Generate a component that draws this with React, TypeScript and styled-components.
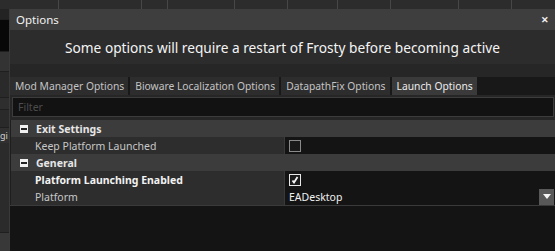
import styled, { createGlobalStyle } from 'styled-components';

const GlobalStyle = createGlobalStyle`
  html, body {
    margin: 0;
    padding: 0;
    background: #2a2a2a;
    overflow: hidden;
  }
  * {
    box-sizing: border-box;
  }
`;

const Page = styled.div`
  width: 555px;
  height: 251px;
  display: flex;
  flex-direction: column;
  font-family: 'Noto Sans', 'Open Sans', sans-serif;
  overflow: hidden;
`;

const TopStrip = styled.div`
  height: 9px;
  display: flex;
  flex-shrink: 0;
  background: #2c2c2c;
`;

const TopCell = styled.div<{ $w: number }>`
  width: ${(p) => p.$w}px;
  flex-shrink: 0;
  border-left: 1px solid #474747;
  &:first-child {
    border-left: none;
  }
`;

const Body = styled.div`
  flex: 1;
  display: flex;
  min-height: 0;
`;

const LeftStrip = styled.div`
  width: 9px;
  flex-shrink: 0;
  display: flex;
  flex-direction: column;
  overflow: hidden;
`;

const LeftPiece = styled.div<{ $h: number; $bg: string }>`
  height: ${(p) => p.$h}px;
  flex-shrink: 0;
  background: ${(p) => p.$bg};
  border-bottom: 1px solid #1f1f1f;
`;

const LeftText = styled.div`
  font-size: 9px;
  color: #d0d0d0;
  line-height: 15px;
  height: 15px;
  background: #303030;
  flex-shrink: 0;
`;

const Dialog = styled.div`
  flex: 1;
  display: flex;
  flex-direction: column;
  background: #141414;
  border-left: 1px solid #3a3a3a;
  min-width: 0;
`;

const TitleBar = styled.div`
  height: 21px;
  flex-shrink: 0;
  background: #3e3e3e;
  display: flex;
  align-items: center;
  justify-content: space-between;
  padding: 0 6px 0 6px;
  color: #f2f2f2;
  font-size: 11.5px;
`;

const Close = styled.span`
  font-size: 9px;
  font-weight: bold;
  line-height: 1;
`;

const Message = styled.div`
  height: 34px;
  flex-shrink: 0;
  background: #2c2c2c;
  display: flex;
  align-items: center;
  justify-content: center;
  color: #f4f4f4;
  font-size: 13.7px;
`;

const Spacer = styled.div`
  height: 13px;
  flex-shrink: 0;
  background: #262626;
`;

const TabBar = styled.div`
  height: 18px;
  flex-shrink: 0;
  display: flex;
  background: #181818;
  gap: 2px;
`;

const Tab = styled.div<{ $active?: boolean }>`
  display: flex;
  align-items: center;
  padding: 0 4px 0 5px;
  font-size: 10.3px;
  color: ${(p) => (p.$active ? '#ececec' : '#c4c4c4')};
  background: ${(p) => (p.$active ? '#3a3a3a' : '#2d2d2d')};
  white-space: nowrap;
`;

const FilterWrap = styled.div`
  flex-shrink: 0;
  padding: 2px 1px 3px 2px;
  background: #262626;
`;

const Filter = styled.div`
  height: 20px;
  background: #121212;
  border: 1px solid #3c3c3c;
  display: flex;
  align-items: center;
  padding-left: 5px;
  font-size: 10.5px;
  color: #4c4c4c;
`;

const Grid = styled.div`
  display: flex;
  flex-direction: column;
  border-bottom: 1px solid #3a3a3a;
  padding-left: 1px;
  background: #1e1e1e;
`;

const HeaderRow = styled.div`
  height: 17px;
  display: flex;
  align-items: center;
  background: #3c3c3c;
  color: #e6e6e6;
  font-size: 10.5px;
  font-weight: bold;
  padding-left: 9px;
`;

const Expander = styled.span`
  width: 8px;
  height: 8px;
  background: #f0f0f0;
  display: flex;
  align-items: center;
  justify-content: center;
  margin-right: 8px;
  &::after {
    content: '';
    width: 6px;
    height: 2px;
    background: #222;
  }
`;

const ItemRow = styled.div`
  height: 17px;
  display: flex;
`;

const NameCell = styled.div<{ $bold?: boolean }>`
  width: 274px;
  flex-shrink: 0;
  background: #2d2d2d;
  border-right: 1px solid #3a3a3a;
  display: flex;
  align-items: center;
  padding-left: 24px;
  font-size: 10.5px;
  color: ${(p) => (p.$bold ? '#f2f2f2' : '#c8c8c8')};
  font-weight: ${(p) => (p.$bold ? 'bold' : 'normal')};
`;

const ValueCell = styled.div`
  flex: 1;
  background: #141414;
  display: flex;
  align-items: center;
  justify-content: space-between;
  padding-left: 4px;
  padding-right: 1px;
  font-size: 10.5px;
  color: #f0f0f0;
`;

const Check = styled.span<{ $on?: boolean }>`
  width: 12px;
  height: 12px;
  border: 1px solid ${(p) => (p.$on ? '#e8e8e8' : '#8a8a8a')};
  background: #1a1a1a;
  display: flex;
  align-items: center;
  justify-content: center;
`;

const DropButton = styled.span`
  width: 15px;
  height: 16px;
  background: #585858;
  display: flex;
  align-items: center;
  justify-content: center;
`;

const topCells = [58, 83, 26, 67, 53, 50, 53, 68, 53, 44];

function App() {
  return (
    <>
      <GlobalStyle />
      <Page>
        <TopStrip>
          {topCells.map((w, i) => (
            <TopCell key={i} $w={w} />
          ))}
        </TopStrip>
        <Body>
          <LeftStrip>
            <LeftPiece $h={11} $bg="#232323" />
            <LeftPiece $h={32} $bg="#080808" />
            <LeftPiece $h={20} $bg="#333333" />
            <LeftPiece $h={26} $bg="#2a2a2a" />
            <LeftPiece $h={12} $bg="#2e2e2e" />
            <LeftPiece $h={18} $bg="#2a2a2a" />
            <LeftText>gi</LeftText>
            <LeftPiece $h={90} $bg="#2b2b2b" />
            <LeftPiece $h={20} $bg="#383838" />
          </LeftStrip>
          <Dialog>
            <TitleBar>
              <span>Options</span>
              <Close>✕</Close>
            </TitleBar>
            <Message>Some options will require a restart of Frosty before becoming active</Message>
            <Spacer />
            <TabBar>
              <Tab>Mod Manager Options</Tab>
              <Tab>Bioware Localization Options</Tab>
              <Tab>DatapathFix Options</Tab>
              <Tab $active>Launch Options</Tab>
            </TabBar>
            <FilterWrap>
              <Filter>Filter</Filter>
            </FilterWrap>
            <Grid>
              <HeaderRow>
                <Expander />
                Exit Settings
              </HeaderRow>
              <ItemRow>
                <NameCell>Keep Platform Launched</NameCell>
                <ValueCell>
                  <Check />
                </ValueCell>
              </ItemRow>
              <HeaderRow>
                <Expander />
                General
              </HeaderRow>
              <ItemRow>
                <NameCell $bold>Platform Launching Enabled</NameCell>
                <ValueCell>
                  <Check $on>
                    <svg width="8" height="8" viewBox="0 0 8 8">
                      <path d="M1.5 4.5 L3 6.5 L6.5 1" stroke="#f4f4f4" strokeWidth="1.8" fill="none" />
                    </svg>
                  </Check>
                </ValueCell>
              </ItemRow>
              <ItemRow>
                <NameCell>Platform</NameCell>
                <ValueCell>
                  <span>EADesktop</span>
                  <DropButton>
                    <svg width="8" height="5" viewBox="0 0 8 5">
                      <path d="M0 0 H8 L4 5 Z" fill="#f4f4f4" />
                    </svg>
                  </DropButton>
                </ValueCell>
              </ItemRow>
            </Grid>
          </Dialog>
        </Body>
      </Page>
    </>
  );
}

export default App;
